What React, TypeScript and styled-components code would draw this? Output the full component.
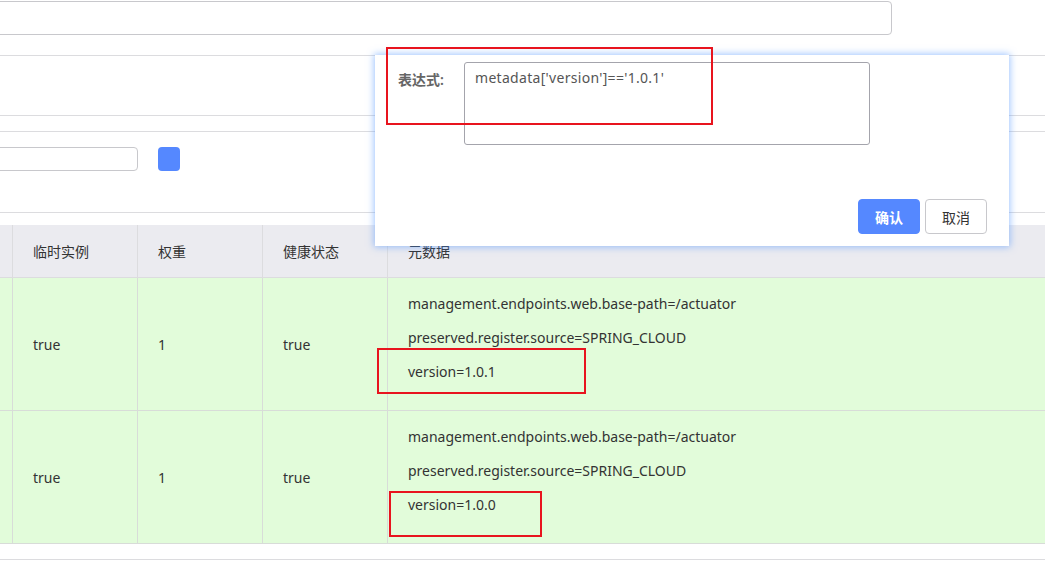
import React from "react";
import styled, { createGlobalStyle } from "styled-components";

const GlobalStyle = createGlobalStyle`
  html, body {
    margin: 0;
    padding: 0;
    background: #fff;
    overflow: hidden;
  }
  body {
    font-family: "Noto Sans", "Noto Sans CJK SC", sans-serif;
    font-size: 14px;
    color: #333;
  }
`;

interface Instance {
  ephemeral: string;
  weight: string;
  healthy: string;
  metadata: string[];
}

const instances: Instance[] = [
  {
    ephemeral: "true",
    weight: "1",
    healthy: "true",
    metadata: [
      "management.endpoints.web.base-path=/actuator",
      "preserved.register.source=SPRING_CLOUD",
      "version=1.0.1",
    ],
  },
  {
    ephemeral: "true",
    weight: "1",
    healthy: "true",
    metadata: [
      "management.endpoints.web.base-path=/actuator",
      "preserved.register.source=SPRING_CLOUD",
      "version=1.0.0",
    ],
  },
];

const columns = ["", "临时实例", "权重", "健康状态", "元数据"];
const colTemplate = "13px 125px 125px 125px 1fr";

export default function App() {
  return (
    <Page>
      <GlobalStyle />
      <TopBar>
        <WideInput />
      </TopBar>
      <Band $height={59} />
      <Band $height={15} />
      <SearchRow>
        <SearchInput />
        <SearchButton />
      </SearchRow>
      <Table>
        <HeaderRow>
          {columns.map((c, i) => (
            <HeadCell key={i}>{c}</HeadCell>
          ))}
        </HeaderRow>
        {instances.map((row, i) => (
          <BodyRow key={i}>
            <Cell />
            <Cell>{row.ephemeral}</Cell>
            <Cell>{row.weight}</Cell>
            <Cell>{row.healthy}</Cell>
            <MetaCell>
              {row.metadata.map((m) => (
                <MetaLine key={m}>{m}</MetaLine>
              ))}
            </MetaCell>
          </BodyRow>
        ))}
      </Table>
      <Footer />

      <Dialog>
        <FormRow>
          <Label>表达式:</Label>
          <TextArea defaultValue="metadata['version']=='1.0.1'" />
        </FormRow>
        <Actions>
          <PrimaryButton>确认</PrimaryButton>
          <Button>取消</Button>
        </Actions>
      </Dialog>

      <Mark style={{ left: 386, top: 47, width: 327, height: 78 }} />
      <Mark style={{ left: 377, top: 348, width: 209, height: 46 }} />
      <Mark style={{ left: 389, top: 491, width: 153, height: 46 }} />
    </Page>
  );
}

const Page = styled.div`
  position: relative;
  width: 1045px;
  height: 565px;
  overflow: hidden;
`;

const TopBar = styled.div`
  height: 54px;
  padding-top: 1px;
  border-bottom: 1px solid #dcdcdf;
`;

const WideInput = styled.div`
  margin-left: -20px;
  width: 910px;
  height: 32px;
  border: 1px solid #c8c8cc;
  border-radius: 4px;
`;

const Band = styled.div<{ $height: number }>`
  height: ${(p) => p.$height}px;
  border-bottom: 1px solid #dcdcdf;
`;

const SearchRow = styled.div`
  display: flex;
  align-items: flex-start;
  gap: 20px;
  height: 65px;
  padding-top: 15px;
  border-bottom: 1px solid #dcdcdf;
`;

const SearchInput = styled.div`
  margin-left: -20px;
  width: 156px;
  height: 22px;
  border: 1px solid #c8c8cc;
  border-radius: 4px;
`;

const SearchButton = styled.div`
  width: 22px;
  height: 24px;
  background: #5588ff;
  border-radius: 4px;
`;

const Table = styled.div`
  margin-top: 12px;
`;

const HeaderRow = styled.div`
  display: grid;
  grid-template-columns: ${colTemplate};
  height: 53px;
  background: #ebebf0;
  border-bottom: 1px solid #dcdcdf;
  box-sizing: border-box;
`;

const HeadCell = styled.div`
  display: flex;
  align-items: center;
  padding-left: 20px;
  border-right: 1px solid #dcdcdf;
  color: #333;
  &:first-child {
    padding-left: 0;
  }
  &:last-child {
    border-right: none;
  }
`;

const BodyRow = styled.div`
  display: grid;
  grid-template-columns: ${colTemplate};
  height: 133px;
  background: #e2fcda;
  border-bottom: 1px solid #d8dcd8;
  box-sizing: border-box;
`;

const Cell = styled.div`
  display: flex;
  align-items: center;
  padding-left: 20px;
  border-right: 1px solid #d8dcd8;
  color: #333;
  &:first-child {
    padding-left: 0;
  }
`;

const MetaCell = styled.div`
  display: flex;
  flex-direction: column;
  padding: 15px 0 0 20px;
`;

const MetaLine = styled.div`
  height: 34px;
  line-height: 22px;
  color: #333;
  white-space: nowrap;
`;

const Footer = styled.div`
  height: 15px;
  border-bottom: 1px solid #dcdcdf;
`;

const Dialog = styled.div`
  position: absolute;
  left: 375px;
  top: 55px;
  width: 634px;
  height: 191px;
  box-sizing: border-box;
  background: #fff;
  box-shadow: 0 0 7px 1px rgba(80, 150, 255, 0.55);
  padding: 7px 22px 12px 23px;
  display: flex;
  flex-direction: column;
`;

const FormRow = styled.div`
  display: flex;
  align-items: flex-start;
  gap: 15px;
`;

const Label = styled.div`
  margin-top: 7px;
  width: 51px;
  font-weight: 600;
  color: #666;
  white-space: nowrap;
`;

const TextArea = styled.textarea`
  width: 406px;
  height: 83px;
  box-sizing: border-box;
  border: 1px solid #a4a4ac;
  border-radius: 3px;
  padding: 5px 10px;
  resize: none;
  font-family: "Noto Sans", "Noto Sans CJK SC", sans-serif;
  font-size: 14px;
  letter-spacing: 0.3px;
  color: #555;
  outline: none;
`;

const Actions = styled.div`
  margin-top: auto;
  display: flex;
  justify-content: flex-end;
  gap: 5px;
`;

const Button = styled.button`
  width: 62px;
  height: 35px;
  box-sizing: border-box;
  border: 1px solid #c8c8cc;
  border-radius: 4px;
  background: #fff;
  color: #333;
  font-family: "Noto Sans", "Noto Sans CJK SC", sans-serif;
  font-size: 14px;
  padding: 0;
`;

const PrimaryButton = styled(Button)`
  background: #5588ff;
  border-color: #5588ff;
  color: #fff;
  font-weight: 600;
`;

const Mark = styled.div`
  position: absolute;
  box-sizing: border-box;
  border: 2px solid #e8141e;
  pointer-events: none;
`;
